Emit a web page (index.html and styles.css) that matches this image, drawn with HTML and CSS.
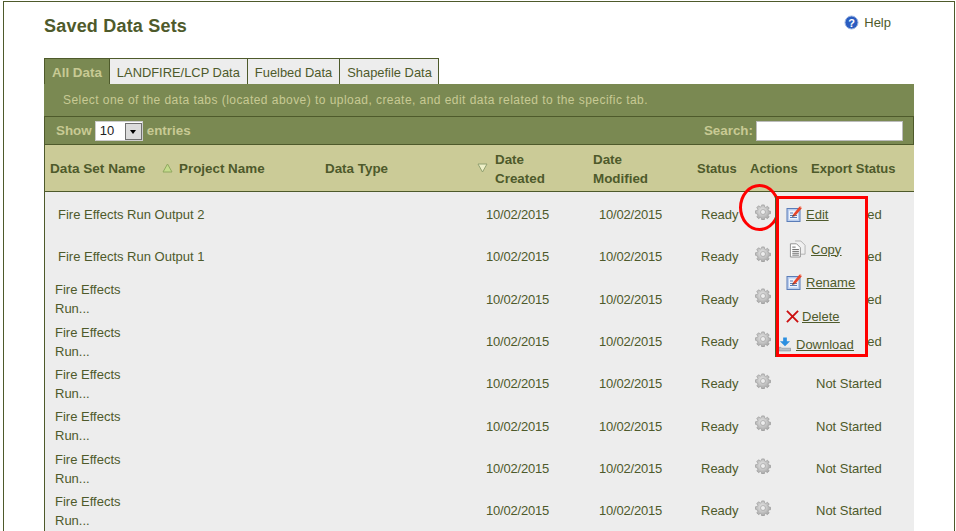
FILE: index.html
```html
<!DOCTYPE html>
<html lang="en">
<head>
    <meta charset="UTF-8">
    <title>Saved Data Sets</title>
    <link rel="stylesheet" href="styles.css">
</head>
<body>
    <svg class="defs" width="0" height="0">
        <defs>
            <radialGradient id="gearFill" cx="45%" cy="40%" r="70%">
                <stop offset="0" stop-color="#e8e8e8"/>
                <stop offset="1" stop-color="#9c9c9c"/>
            </radialGradient>
            <symbol id="gear" viewBox="0 0 18 18">
                <path fill="url(#gearFill)" stroke="#979797" stroke-width="0.7" fill-rule="evenodd" d="M7.600 1h2.800l.4 2.200 1.300.6 1.900-1.300 2 2-1.300 1.900.6 1.300 2.200.4v2.800l-2.200.4-.6 1.300 1.300 1.900-2 2-1.900-1.300-1.300.6-.4 2.200H7.600l-.4-2.200-1.300-.6-1.900 1.300-2-2 1.300-1.900-.6-1.300L.5 10.400V7.600l2.200-.4.6-1.300L2 4l2-2 1.900 1.300 1.300-.6zM9 6.200a2.800 2.800 0 1 0 0 5.600 2.800 2.800 0 0 0 0-5.600z"/>
            </symbol>
            <symbol id="editIcon" viewBox="0 0 16 18">
                <rect x="1" y="3.500" width="13" height="13" fill="#b9cdee" stroke="#5a7db8"/>
                <rect x="3" y="5.500" width="9" height="9" fill="#eef3fb"/>
                <path d="M4 8h3M4 10.500h7M4 12.500h7" stroke="#5a7db8"/>
                <path d="M7 9.500L13.500 1.500 15.800 3.300 9.200 11z" fill="#e8452a"/>
                <path d="M13.500 1.500L15.800 3.300 15 .9z" fill="#f4a08c"/>
                <path d="M6 12l1-2.500 2.200 1.500z" fill="#7a3a2a"/>
            </symbol>
        </defs>
    </svg>

    <div class="page">
        <div class="head">
            <h1>Saved Data Sets</h1>
            <a class="help" href="#">
                <svg width="15" height="15" viewBox="0 0 15 15">
                    <circle cx="7.500" cy="7.500" r="6.500" fill="#2a5cc0" stroke="#9db6e2"/>
                    <text x="7.500" y="11.500" text-anchor="middle" class="help-mark">?</text>
                </svg>
                Help
            </a>
        </div>

        <ul class="tabs">
            <li class="tab active">All Data</li>
            <li class="tab">LANDFIRE/LCP Data</li>
            <li class="tab">Fuelbed Data</li>
            <li class="tab">Shapefile Data</li>
        </ul>

        <div class="panel">
            <p class="note">Select one of the data tabs (located above) to upload, create, and edit data related to the specific tab.</p>
            <div class="controls">
                <label class="length">Show
                    <span class="select-wrap">
                        <select>
                            <option>10</option>
                            <option>25</option>
                            <option>50</option>
                        </select>
                        <span class="select-arrow"></span>
                    </span>
                    entries
                </label>
                <label class="search">Search: <input type="text"></label>
            </div>

            <table class="data">
                <colgroup>
                    <col class="c-name"><col class="c-project"><col class="c-type"><col class="c-created">
                    <col class="c-modified"><col class="c-status"><col class="c-actions"><col class="c-export">
                </colgroup>
                <thead>
                    <tr>
                        <th class="th-name">Data Set Name</th>
                        <th class="sort-up">Project Name</th>
                        <th class="th-type">Data Type</th>
                        <th class="sort-down">Date<br>Created</th>
                        <th class="th-modified">Date<br>Modified</th>
                        <th class="th-status">Status</th>
                        <th class="th-actions">Actions</th>
                        <th class="th-export">Export Status</th>
                    </tr>
                </thead>
                <tbody>
                    <tr>
                        <td class="name long">Fire Effects Run Output 2</td><td></td><td></td>
                        <td class="created">10/02/2015</td><td class="modified">10/02/2015</td><td class="status">Ready</td>
                        <td class="actions"><svg class="gear"><use href="#gear"/></svg></td>
                        <td class="export">Not Started</td>
                    </tr>
                    <tr>
                        <td class="name long">Fire Effects Run Output 1</td><td></td><td></td>
                        <td class="created">10/02/2015</td><td class="modified">10/02/2015</td><td class="status">Ready</td>
                        <td class="actions"><svg class="gear"><use href="#gear"/></svg></td>
                        <td class="export">Not Started</td>
                    </tr>
                    <tr>
                        <td class="name">Fire Effects<br>Run...</td><td></td><td></td>
                        <td class="created">10/02/2015</td><td class="modified">10/02/2015</td><td class="status">Ready</td>
                        <td class="actions"><svg class="gear"><use href="#gear"/></svg></td>
                        <td class="export">Not Started</td>
                    </tr>
                    <tr>
                        <td class="name">Fire Effects<br>Run...</td><td></td><td></td>
                        <td class="created">10/02/2015</td><td class="modified">10/02/2015</td><td class="status">Ready</td>
                        <td class="actions"><svg class="gear"><use href="#gear"/></svg></td>
                        <td class="export">Not Started</td>
                    </tr>
                    <tr>
                        <td class="name">Fire Effects<br>Run...</td><td></td><td></td>
                        <td class="created">10/02/2015</td><td class="modified">10/02/2015</td><td class="status">Ready</td>
                        <td class="actions"><svg class="gear"><use href="#gear"/></svg></td>
                        <td class="export">Not Started</td>
                    </tr>
                    <tr>
                        <td class="name">Fire Effects<br>Run...</td><td></td><td></td>
                        <td class="created">10/02/2015</td><td class="modified">10/02/2015</td><td class="status">Ready</td>
                        <td class="actions"><svg class="gear"><use href="#gear"/></svg></td>
                        <td class="export">Not Started</td>
                    </tr>
                    <tr>
                        <td class="name">Fire Effects<br>Run...</td><td></td><td></td>
                        <td class="created">10/02/2015</td><td class="modified">10/02/2015</td><td class="status">Ready</td>
                        <td class="actions"><svg class="gear"><use href="#gear"/></svg></td>
                        <td class="export">Not Started</td>
                    </tr>
                    <tr>
                        <td class="name">Fire Effects<br>Run...</td><td></td><td></td>
                        <td class="created">10/02/2015</td><td class="modified">10/02/2015</td><td class="status">Ready</td>
                        <td class="actions"><svg class="gear"><use href="#gear"/></svg></td>
                        <td class="export">Not Started</td>
                    </tr>
                </tbody>
            </table>

            <!-- callout over the first row -->
            <div class="ring"></div>
            <div class="menu">
                <a class="item edit" href="#"><svg class="ico"><use href="#editIcon"/></svg><span>Edit</span></a>
                <a class="item copy" href="#">
                    <svg class="ico-copy" viewBox="0 0 18 18">
                        <path d="M6.500.5h6l4.500 4.500v9.500h-5" fill="#f0f0f0" stroke="#b0b0b0"/>
                        <path d="M1.500 3.500h6.500l4 4v10H1.500z" fill="#fff" stroke="#8e8e8e"/>
                        <path d="M3.500 7h3.500M3.500 9.500h7M3.500 11.500h7M3.500 13.500h7M3.500 15.500h7" stroke="#666"/>
                    </svg>
                    <span>Copy</span>
                </a>
                <a class="item rename" href="#"><svg class="ico"><use href="#editIcon"/></svg><span>Rename</span></a>
                <a class="item delete" href="#">
                    <svg class="ico-x" viewBox="0 0 14 14">
                        <path d="M1 1l12 12M13 1L1 13" stroke="#cc1010" stroke-width="2"/>
                    </svg>
                    <span>Delete</span>
                </a>
                <a class="item download" href="#">
                    <svg class="ico-down" viewBox="0 0 13 15">
                        <path d="M4.500 0h4v4h3.500L6.500 9.500 1 4h3.500z" fill="#2b8fe0"/>
                        <path d="M0 10.500h2l1 1h9.500v3H0z" fill="#b8c0c6" stroke="#7f878d" stroke-width="0.600"/>
                    </svg>
                    <span>Download</span>
                </a>
            </div>
        </div>
    </div>
</body>
</html>
```

FILE: styles.css
```css
html, body {
    margin: 0;
    height: 100%;
    overflow: hidden;
    background: #fff;
}
body {
    color: #4e5a2b;
    font-family: "Liberation Sans", Arial, sans-serif;
    font-size: 13px;
}
.defs {
    display: block;
    height: 0;
}
.page {
    margin: 1px 1px 0 3px;
    padding: 0 40px 0 40px;
    border: 1px solid #4e5a2b;
    border-bottom: none;
    min-height: 600px;
}
.head {
    display: flex;
    justify-content: space-between;
    height: 56px;
}
h1 {
    margin: 14px 0 0;
    font-size: 18px;
    line-height: 20px;
    letter-spacing: 0.2px;
}
.help {
    display: flex;
    align-items: center;
    gap: 5px;
    height: 16px;
    margin: 12px 23px 0 0;
    color: #4e5a2b;
    text-decoration: none;
}
.help-mark {
    fill: #fff;
    font-size: 11px;
    font-weight: bold;
}
.tabs {
    display: flex;
    list-style: none;
    margin: 0;
    padding: 0;
}
.tab {
    padding: 0 7px;
    height: 25px;
    line-height: 27px;
    font-size: 12.900px;
    background: #ededed;
    border: 1px solid #4e5a2b;
    border-bottom: none;
    border-left: none;
}
.tab:last-child {
    padding-right: 6px;
}
.tab.active {
    padding: 0 7px;
    color: #c8ca94;
    font-size: 13.400px;
    font-weight: bold;
    background: #7a8952;
    border-left: 1px solid #4e5a2b;
}
.panel {
    position: relative;
    width: 870px;
    background: #7a8952;
}
.note {
    margin: 0;
    height: 32px;
    padding-left: 19px;
    line-height: 33px;
    color: #c8ca94;
    font-size: 12px;
    letter-spacing: 0.450px;
}
.controls {
    display: flex;
    justify-content: space-between;
    align-items: center;
    height: 27px;
    padding: 0 10px 0 11px;
    border: 1px solid #4e5a2b;
    color: #c8ca94;
    font-size: 13.400px;
    font-weight: bold;
}
.length, .search {
    display: flex;
    align-items: center;
    gap: 3px;
}
.select-wrap {
    position: relative;
    display: block;
    width: 48px;
    height: 20px;
    margin-right: 1px;
}
.select-wrap select {
    display: block;
    appearance: none;
    width: 48px;
    height: 20px;
    padding: 0 0 0 4px;
    margin: 0;
    border: 1px solid #ccc;
    border-radius: 0;
    background: #fff;
    color: #222;
    font-family: "Liberation Sans", Arial, sans-serif;
    font-size: 13px;
}
.select-arrow {
    position: absolute;
    top: 2px;
    right: 1px;
    width: 17px;
    height: 17px;
    box-sizing: border-box;
    border: 1px solid #707070;
    background: #dcdcdc;
}
.select-arrow::after {
    content: "";
    position: absolute;
    left: 4px;
    top: 6px;
    border: 3px solid transparent;
    border-top: 4px solid #000;
    border-bottom: none;
}
.search input {
    width: 147px;
    height: 20px;
    box-sizing: border-box;
    padding: 0;
    margin: 0;
    border: 1px solid #bbb;
    background: #fff;
}
.data {
    width: 870px;
    table-layout: fixed;
    border-collapse: separate;
    border-spacing: 0;
    background: #ededed;
    border-left: 1px solid #4e5a2b;
}
.c-name { width: 115px; }
.c-project { width: 160px; }
.c-type { width: 155px; }
.c-created { width: 112px; }
.c-modified { width: 104px; }
.c-status { width: 53px; }
.c-actions { width: 60px; }
.data th {
    box-sizing: border-box;
    height: 47px;
    padding: 0 0 0 5px;
    background: #cbcb97;
    border-bottom: 1px solid #4e5a2b;
    text-align: left;
    font-size: 13.400px;
    line-height: 19px;
    white-space: nowrap;
}
.data th.th-name { font-size: 13.600px; }
.data th.sort-up {
    padding-left: 19px;
    background: #cbcb97 url("data:image/svg+xml,%3Csvg xmlns='http://www.w3.org/2000/svg' width='11' height='10'%3E%3Cpath d='M5.500 1L10 9H1z' fill='%23c4dc8c' stroke='%2390a860'/%3E%3C/svg%3E") no-repeat 2px 18px;
}
.data th.sort-down {
    padding: 2px 0 0 20px;
    background: #cbcb97 url("data:image/svg+xml,%3Csvg xmlns='http://www.w3.org/2000/svg' width='11' height='10'%3E%3Cpath d='M1 1h9L5.500 9z' fill='%23eef0c8' stroke='%2390a070'/%3E%3C/svg%3E") no-repeat 2px 18px;
}
.data th.th-type { padding-left: 5px; }
.data th.th-modified { padding: 2px 0 0 6px; }
.data th.th-status { padding-left: 6px; font-size: 13px; }
.data th.th-actions { padding-left: 6px; font-size: 13px; }
.data th.th-export { padding-left: 7px; font-size: 13px; }
.data td {
    height: 42.330px;
    padding: 3px 0 0;
    box-sizing: border-box;
    line-height: 19px;
    vertical-align: middle;
}
.data td.name { padding-left: 10px; }
.data td.long {
    padding-left: 13px;
    white-space: nowrap;
}
.data td.created { padding-left: 11px; letter-spacing: -0.200px; }
.data td.modified { padding-left: 12px; letter-spacing: -0.200px; }
.data td.status { padding-left: 10px; }
.data td.actions { padding-left: 11px; }
.data td.export { padding-left: 12px; }
.gear {
    display: block;
    width: 16px;
    height: 16px;
    margin-top: -6px;
}
.ring {
    position: absolute;
    left: 695px;
    top: 100px;
    width: 35px;
    height: 41px;
    border: 3px solid #f00;
    border-radius: 50%;
}
.menu {
    position: absolute;
    left: 732px;
    top: 112px;
    width: 86px;
    height: 155px;
    border: 3px solid #f00;
    background: #ededed;
    box-shadow: -1px 0 0 #4e5a2b;
}
.item {
    position: absolute;
    display: flex;
    align-items: center;
    color: #4e5a2b;
}
.item span {
    text-decoration: underline;
}
.ico {
    width: 16px;
    height: 18px;
}
.edit { left: 7px; top: 6px; gap: 4px; }
.copy { left: 10px; top: 41px; gap: 5px; }
.rename { left: 7px; top: 74px; gap: 4px; }
.delete { left: 7px; top: 110px; gap: 3px; }
.download { left: 0; top: 138px; gap: 5px; }
.ico-copy { width: 17px; height: 18px; }
.ico-x { width: 13px; height: 13px; }
.ico-down { width: 12px; height: 15px; }
```
